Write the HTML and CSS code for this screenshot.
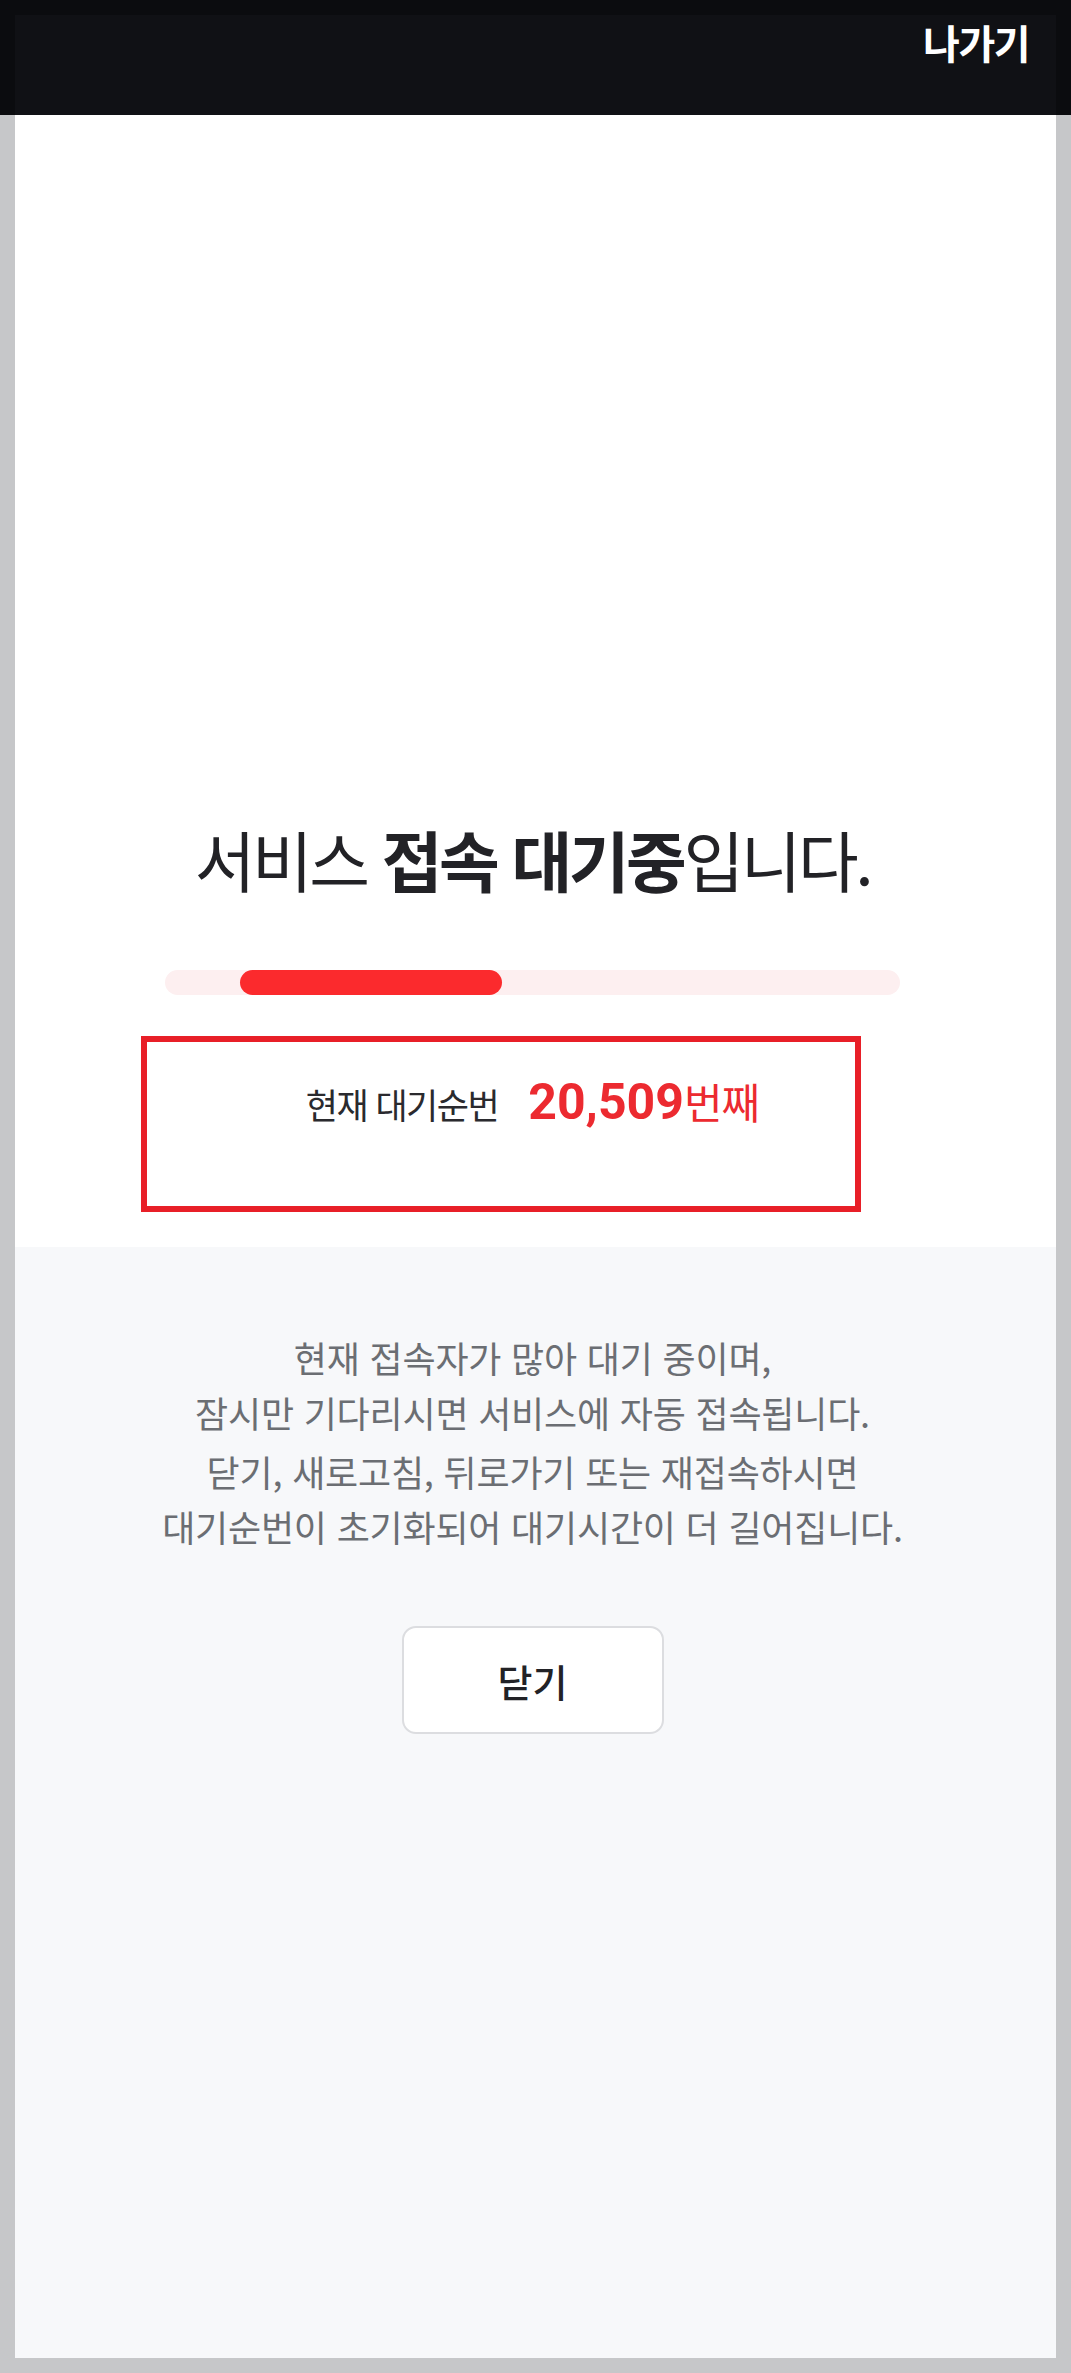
FILE: index.html
```html
<!DOCTYPE html>
<html lang="ko">
<head>
    <meta charset="UTF-8">
    <meta name="viewport" content="width=device-width, initial-scale=1.0">
    <title>서비스 접속 대기중</title>
    <link rel="stylesheet" href="styles.css">
</head>
<body>
    <header class="topbar">
        <div class="topbar-inner">
            <a class="exit" href="#">나가기</a>
        </div>
    </header>
    <div class="page">
        <section class="wait">
            <h1 class="title">서비스 <strong>접속 대기중</strong>입니다.</h1>
            <div class="progress-track">
                <div class="progress-fill"></div>
            </div>
            <p class="queue">
                <span class="queue-label">현재 대기순번</span>
                <span class="queue-num"><b>20,509</b>번째</span>
            </p>
            <div class="highlight-box"></div>
        </section>
        <section class="info">
            <p>현재 접속자가 많아 대기 중이며,<br>잠시만 기다리시면 서비스에 자동 접속됩니다.</p>
            <p>닫기, 새로고침, 뒤로가기 또는 재접속하시면<br>대기순번이 초기화되어 대기시간이 더 길어집니다.</p>
            <button class="close-btn">닫기</button>
        </section>
    </div>
</body>
</html>
```

FILE: styles.css
```css
body {
    margin: 0;
    background-color: #c6c7c9;
    font-family: "Noto Sans CJK KR", "Noto Sans", sans-serif;
    color: #222226;
}
.topbar {
    background-color: #0b0c0f;
    padding: 15px 15px 0;
}
.topbar-inner {
    height: 100px;
    background-color: #101115;
    display: flex;
    justify-content: flex-end;
    align-items: flex-start;
    padding-right: 27px;
}
.exit {
    color: #fff;
    text-decoration: none;
    font-size: 40px;
    font-weight: bold;
    letter-spacing: -1.5px;
    line-height: 54px;
}
.page {
    margin: 0 15px 15px;
}
.wait {
    position: relative;
    background-color: #fff;
    display: flex;
    flex-direction: column;
    align-items: center;
    padding: 702px 6px 113px 0;
}
.title {
    margin: 0;
    font-size: 66px;
    line-height: 82px;
    font-weight: normal;
    letter-spacing: -3.4px;
    color: #222226;
}
.title strong {
    font-weight: bold;
}
.progress-track {
    width: 735px;
    height: 25px;
    margin-top: 71px;
    border-radius: 13px;
    background-color: #fdeff0;
    overflow: hidden;
}
.progress-fill {
    height: 100%;
    width: 262px;
    margin-left: 75px;
    border-radius: 13px;
    background-color: #fb2a2d;
}
.queue {
    margin: 76px 0 0;
    line-height: 60px;
    display: flex;
    align-items: baseline;
    gap: 30px;
}
.queue-label {
    font-size: 35px;
    letter-spacing: -1.5px;
    color: #2a2a2e;
}
.queue-num {
    color: #ec2a30;
    font-size: 42px;
    letter-spacing: -1px;
}
.queue-num b {
    font-family: Roboto, "Noto Sans", sans-serif;
    font-size: 50px;
    font-weight: bold;
    letter-spacing: 0;
}
.highlight-box {
    position: absolute;
    left: 126px;
    top: 921px;
    width: 708px;
    height: 164px;
    border: 6px solid #e81f28;
}
.info {
    background-color: #f7f8fa;
    min-height: 1111px;
    box-sizing: border-box;
    padding: 83px 6px 0 0;
    display: flex;
    flex-direction: column;
    align-items: center;
    text-align: center;
}
.info p {
    margin: 0 0 4px;
    font-size: 36px;
    line-height: 55px;
    letter-spacing: -0.2px;
    color: #6b6e73;
}
.close-btn {
    margin-top: 68px;
    width: 262px;
    height: 108px;
    background-color: #fff;
    border: 2px solid #dcdde0;
    border-radius: 14px;
    font-family: "Noto Sans CJK KR", sans-serif;
    font-size: 38px;
    font-weight: 500;
    color: #222226;
    cursor: pointer;
}
```
